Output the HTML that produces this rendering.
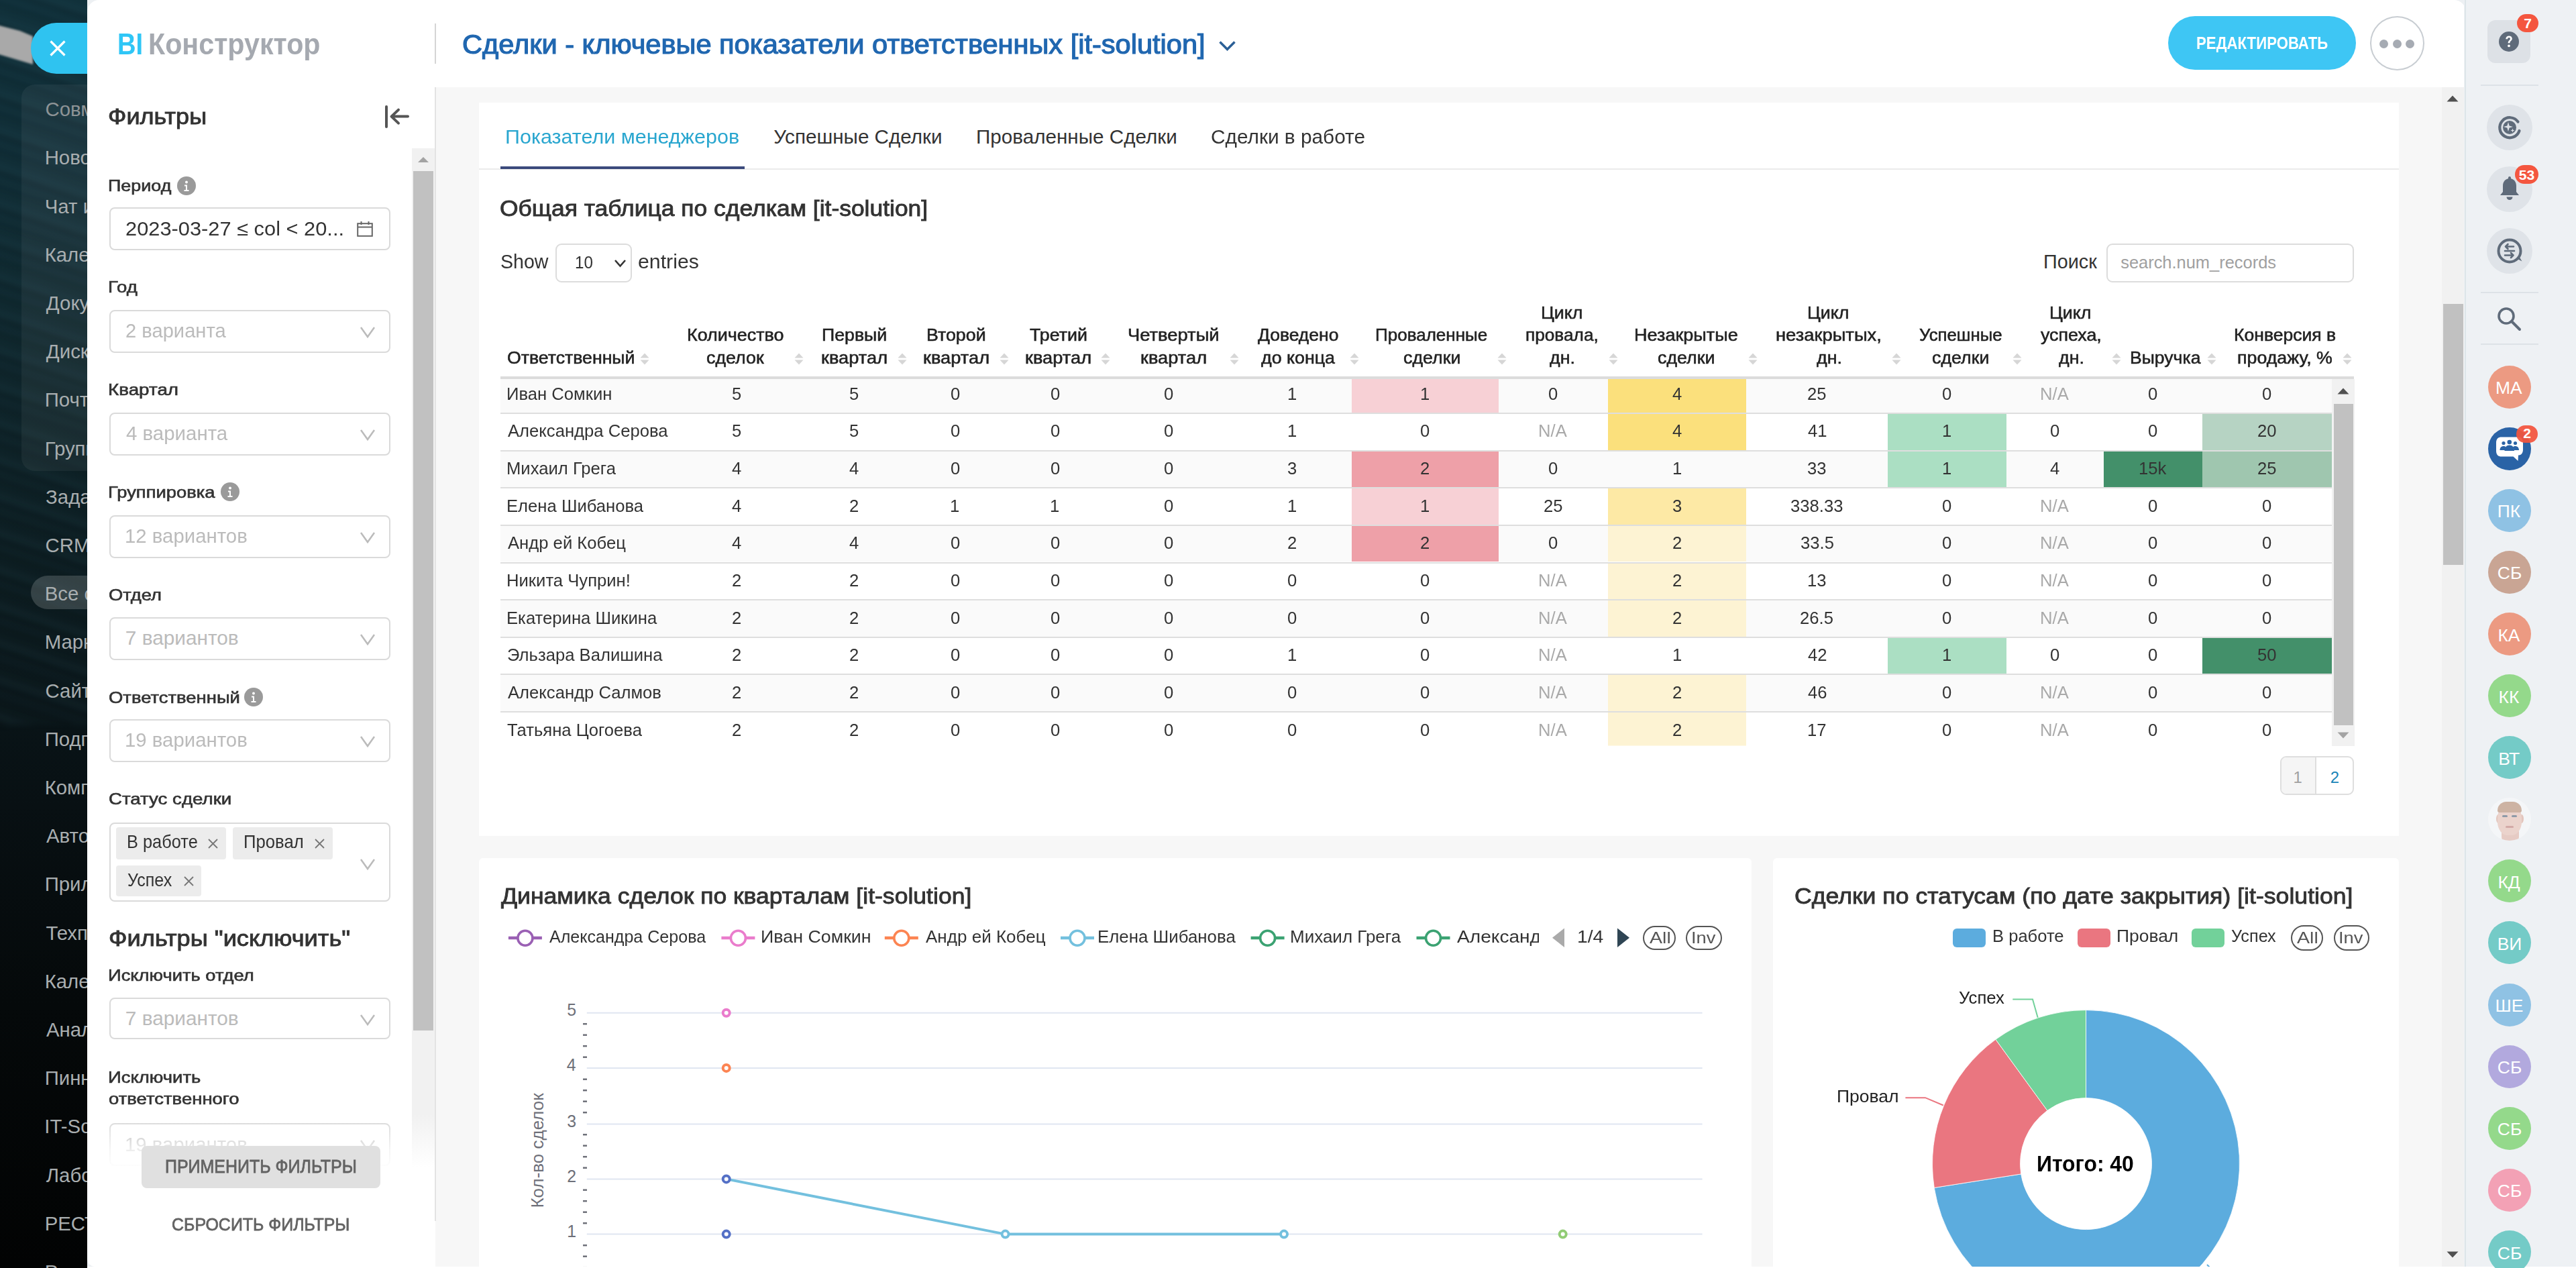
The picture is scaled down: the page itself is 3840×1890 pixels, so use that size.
<!DOCTYPE html><html><head><meta charset="utf-8"><style>
*{box-sizing:border-box}
html,body{margin:0;padding:0}
body{width:3840px;height:1890px;position:relative;overflow:hidden;font-family:"Liberation Sans",sans-serif;background:#050707}
.t{position:absolute;white-space:nowrap}
.b{position:absolute}
svg{position:absolute;overflow:visible}
</style></head><body><div class="b" style="left:0;top:0;width:140px;height:1890px;background:linear-gradient(180deg,#0f2e38 0px,#0f2b34 250px,#0e262d 450px,#0c1e23 700px,#0a171b 950px,#081013 1200px,#05090a 1500px,#020303 1890px)"></div><div class="b" style="left:-60px;top:-20px;width:260px;height:1100px;filter:blur(4px);background:repeating-linear-gradient(198deg,rgba(70,125,140,0.10) 0 12px,rgba(0,0,0,0.16) 12px 17px,rgba(60,115,130,0.06) 17px 33px,rgba(0,0,0,0.12) 33px 37px,rgba(70,125,140,0.04) 37px 52px);"></div><svg style="left:0;top:0;filter:blur(1.5px)" width="60" height="120" viewBox="0 0 60 120"><path d="M-5 37L30 46L49 54L49 96L-5 80Z" fill="#a9a9a9"/></svg><div class="b" style="left:32.00px;top:126.00px;width:168.00px;height:576.00px;background:rgba(255,255,255,0.05);border-radius:20px"></div><div class="b" style="left:46.00px;top:858.00px;width:154.00px;height:50.00px;background:rgba(255,255,255,0.17);border-radius:25px"></div><div class="t" style="left:67.53px;top:148.15px;font-size:29.36px;line-height:29.36px;color:#8d9396;">Совместные</div><div class="t" style="left:66.65px;top:220.35px;font-size:29.36px;line-height:29.36px;color:#a9aeb0;">Новости</div><div class="t" style="left:66.80px;top:292.55px;font-size:29.36px;line-height:29.36px;color:#a9aeb0;">Чат и звонки</div><div class="t" style="left:66.65px;top:364.75px;font-size:29.36px;line-height:29.36px;color:#a9aeb0;">Календарь</div><div class="t" style="left:68.85px;top:436.95px;font-size:29.36px;line-height:29.36px;color:#a9aeb0;">Документы</div><div class="t" style="left:68.85px;top:509.15px;font-size:29.36px;line-height:29.36px;color:#a9aeb0;">Диск</div><div class="t" style="left:66.65px;top:581.35px;font-size:29.36px;line-height:29.36px;color:#a9aeb0;">Почта</div><div class="t" style="left:66.65px;top:653.55px;font-size:29.36px;line-height:29.36px;color:#a9aeb0;">Группы</div><div class="t" style="left:68.12px;top:725.75px;font-size:29.36px;line-height:29.36px;color:#a9aeb0;">Задачи</div><div class="t" style="left:67.53px;top:797.95px;font-size:29.36px;line-height:29.36px;color:#a9aeb0;">CRM</div><div class="t" style="left:66.65px;top:870.15px;font-size:29.36px;line-height:29.36px;color:#a9aeb0;">Все с</div><div class="t" style="left:66.65px;top:942.35px;font-size:29.36px;line-height:29.36px;color:#a9aeb0;">Маркетинг</div><div class="t" style="left:67.53px;top:1014.55px;font-size:29.36px;line-height:29.36px;color:#a9aeb0;">Сайты</div><div class="t" style="left:66.65px;top:1086.75px;font-size:29.36px;line-height:29.36px;color:#a9aeb0;">Подписка</div><div class="t" style="left:66.65px;top:1158.95px;font-size:29.36px;line-height:29.36px;color:#a9aeb0;">Компания</div><div class="t" style="left:69.00px;top:1231.15px;font-size:29.36px;line-height:29.36px;color:#a9aeb0;">Автоматизация</div><div class="t" style="left:66.65px;top:1303.35px;font-size:29.36px;line-height:29.36px;color:#a9aeb0;">Приложения</div><div class="t" style="left:68.41px;top:1375.55px;font-size:29.36px;line-height:29.36px;color:#a9aeb0;">Техподдержка</div><div class="t" style="left:66.65px;top:1447.75px;font-size:29.36px;line-height:29.36px;color:#a9aeb0;">Календарь</div><div class="t" style="left:69.00px;top:1519.95px;font-size:29.36px;line-height:29.36px;color:#a9aeb0;">Аналитика</div><div class="t" style="left:66.65px;top:1592.15px;font-size:29.36px;line-height:29.36px;color:#a9aeb0;">Пинн</div><div class="t" style="left:66.36px;top:1664.35px;font-size:29.36px;line-height:29.36px;color:#a9aeb0;">IT-Solution</div><div class="t" style="left:68.85px;top:1736.55px;font-size:29.36px;line-height:29.36px;color:#a9aeb0;">Лаборатория</div><div class="t" style="left:66.65px;top:1808.75px;font-size:29.36px;line-height:29.36px;color:#a9aeb0;">РЕСТ</div><div class="t" style="left:66.65px;top:1880.95px;font-size:29.36px;line-height:29.36px;color:#a9aeb0;">Разное</div><div class="b" style="left:46.00px;top:34.00px;width:154.00px;height:76.00px;background:#2fc3f0;border-radius:38px"></div><svg style="left:74px;top:60px" width="24" height="24" viewBox="0 0 24 24"><path d="M1.5 1.5L22.5 22.5M22.5 1.5L1.5 22.5" stroke="#fff" stroke-width="3.2"/></svg><div class="b" style="left:3560.00px;top:0.00px;width:280.00px;height:1890.00px;background:#eef1f4"></div><div class="b" style="left:130.00px;top:0.00px;width:3543.00px;height:1890.00px;background:#edf0f3"></div><div class="b" style="left:130.00px;top:0.00px;width:3546.00px;height:1888.00px;background:#fff;border-radius:18px 18px 0 12px"></div><div class="b" style="left:649.00px;top:130.00px;width:3024.00px;height:1758.00px;background:#f7f7f7"></div><div class="b" style="left:648.00px;top:35.00px;width:2.00px;height:60.00px;background:#d5d5d5"></div><div class="b" style="left:648.00px;top:130.00px;width:2.00px;height:1690.00px;background:#e3e3e3"></div><div class="t" style="left:175.12px;top:43.87px;font-size:44.33px;line-height:44.33px;color:#2fc6f6;font-weight:700;transform:scaleX(0.8608);transform-origin:0 0;">BI</div><div class="t" style="left:221.32px;top:43.87px;font-size:44.33px;line-height:44.33px;color:#a5a9b0;font-weight:700;transform:scaleX(0.9299);transform-origin:0 0;">Конструктор</div><div class="t" style="left:688.72px;top:47.04px;font-size:40.12px;line-height:40.12px;color:#2067b0;-webkit-text-stroke:1.2px #2067b0;transform:scaleX(1.0360);transform-origin:0 0;">Сделки - ключевые показатели ответственных [it-solution]</div><svg style="left:1816px;top:60px" width="28" height="16" viewBox="0 0 28 16"><path d="M2.5 2.5L13.5 13.5L24.5 2.5" fill="none" stroke="#2b5f96" stroke-width="3.5"/></svg><div class="b" style="left:3232.00px;top:24.00px;width:280.00px;height:80.00px;background:#3ec6f4;border-radius:40px"></div><div class="t" style="left:3273.96px;top:52.86px;font-size:24.85px;line-height:24.85px;color:#fff;font-weight:700;transform:scaleX(0.8940);transform-origin:0 0;">РЕДАКТИРОВАТЬ</div><div class="b" style="left:3532.50px;top:24.30px;width:81.20px;height:80.70px;border:2px solid #c8cdd2;border-radius:50%"></div><div class="b" style="left:3546.90px;top:58.50px;width:13.00px;height:13.00px;background:#a6abb3;border-radius:50%"></div><div class="b" style="left:3566.50px;top:58.50px;width:13.00px;height:13.00px;background:#a6abb3;border-radius:50%"></div><div class="b" style="left:3586.20px;top:58.50px;width:13.00px;height:13.00px;background:#a6abb3;border-radius:50%"></div><div class="t" style="left:161.02px;top:157.30px;font-size:33.43px;line-height:33.43px;color:#333;-webkit-text-stroke:0.9px #333;transform:scaleX(1.0793);transform-origin:0 0;">Фильтры</div><svg style="left:570px;top:155px" width="44" height="38" viewBox="0 0 44 38"><path d="M6 4V34" stroke="#555" stroke-width="4" stroke-linecap="round"/><path d="M38 18.6H14M24 8.6L13.5 18.6L24 28.6" fill="none" stroke="#555" stroke-width="4" stroke-linecap="round" stroke-linejoin="round"/></svg><div class="t" style="left:160.84px;top:264.81px;font-size:24.56px;line-height:24.56px;color:#333;-webkit-text-stroke:0.65px #333;transform:scaleX(1.0967);transform-origin:0 0;">Период</div><div class="b" style="left:264px;top:263px;width:28px;height:28px;border-radius:50%;background:#9a9a9a"></div><svg style="left:264px;top:263px" width="28" height="28" viewBox="0 0 28 28"><circle cx="14" cy="8.5" r="2" fill="#fff"/><path d="M11 12.5H15V20H17.5V22H10.5V20H13V14.5H11Z" fill="#fff"/></svg><div class="b" style="left:163.00px;top:309.00px;width:419.00px;height:64.00px;border:2px solid #dadada;border-radius:8px;background:#fff"></div><div class="t" style="left:187.46px;top:326.02px;font-size:29.51px;line-height:29.51px;color:#333;transform:scaleX(1.0442);transform-origin:0 0;">2023-03-27 ≤ col &lt; 20...</div><svg style="left:532px;top:329px" width="24" height="24" viewBox="0 0 24 24"><rect x="1.2" y="4.2" width="21.6" height="18.6" fill="none" stroke="#666" stroke-width="2"/><path d="M1 9.5H23M6.5 1V6M17.5 1V6" stroke="#666" stroke-width="2"/></svg><div class="t" style="left:160.79px;top:416.21px;font-size:24.56px;line-height:24.56px;color:#333;-webkit-text-stroke:0.65px #333;transform:scaleX(1.1236);transform-origin:0 0;">Год</div><div class="b" style="left:163.00px;top:462.00px;width:419.00px;height:64.00px;border:2px solid #dadada;border-radius:8px;background:#fff"></div><div class="t" style="left:186.84px;top:478.38px;font-size:29.80px;line-height:29.80px;color:#bbbbbb;transform:scaleX(0.9778);transform-origin:0 0;">2 варианта</div><svg style="left:537px;top:487px" width="22" height="16" viewBox="0 0 22 16"><path d="M1 1L11.0 15L21 1" fill="none" stroke="#bbb" stroke-width="2.5"/></svg><div class="t" style="left:160.77px;top:569.21px;font-size:24.56px;line-height:24.56px;color:#333;-webkit-text-stroke:0.65px #333;transform:scaleX(1.1327);transform-origin:0 0;">Квартал</div><div class="b" style="left:163.00px;top:615.00px;width:419.00px;height:64.00px;border:2px solid #dadada;border-radius:8px;background:#fff"></div><div class="t" style="left:187.71px;top:631.38px;font-size:29.80px;line-height:29.80px;color:#bbbbbb;transform:scaleX(0.9878);transform-origin:0 0;">4 варианта</div><svg style="left:537px;top:640px" width="22" height="16" viewBox="0 0 22 16"><path d="M1 1L11.0 15L21 1" fill="none" stroke="#bbb" stroke-width="2.5"/></svg><div class="t" style="left:160.81px;top:722.21px;font-size:24.56px;line-height:24.56px;color:#333;-webkit-text-stroke:0.65px #333;transform:scaleX(1.1141);transform-origin:0 0;">Группировка</div><div class="b" style="left:329px;top:719px;width:28px;height:28px;border-radius:50%;background:#9a9a9a"></div><svg style="left:329px;top:719px" width="28" height="28" viewBox="0 0 28 28"><circle cx="14" cy="8.5" r="2" fill="#fff"/><path d="M11 12.5H15V20H17.5V22H10.5V20H13V14.5H11Z" fill="#fff"/></svg><div class="b" style="left:163.00px;top:767.50px;width:419.00px;height:64.00px;border:2px solid #dadada;border-radius:8px;background:#fff"></div><div class="t" style="left:186.10px;top:783.88px;font-size:29.80px;line-height:29.80px;color:#bbbbbb;transform:scaleX(0.9854);transform-origin:0 0;">12 вариантов</div><svg style="left:537px;top:792.5px" width="22" height="16.0" viewBox="0 0 22 16.0"><path d="M1 1L11.0 15.0L21 1" fill="none" stroke="#bbb" stroke-width="2.5"/></svg><div class="t" style="left:161.77px;top:874.81px;font-size:24.56px;line-height:24.56px;color:#333;-webkit-text-stroke:0.65px #333;transform:scaleX(1.1129);transform-origin:0 0;">Отдел</div><div class="b" style="left:163.00px;top:920.00px;width:419.00px;height:64.00px;border:2px solid #dadada;border-radius:8px;background:#fff"></div><div class="t" style="left:186.81px;top:936.38px;font-size:29.80px;line-height:29.80px;color:#bbbbbb;">7 вариантов</div><svg style="left:537px;top:945px" width="22" height="16" viewBox="0 0 22 16"><path d="M1 1L11.0 15L21 1" fill="none" stroke="#bbb" stroke-width="2.5"/></svg><div class="t" style="left:161.76px;top:1027.71px;font-size:24.56px;line-height:24.56px;color:#333;-webkit-text-stroke:0.65px #333;transform:scaleX(1.1176);transform-origin:0 0;">Ответственный</div><div class="b" style="left:363.5px;top:1024.5px;width:28px;height:28px;border-radius:50%;background:#9a9a9a"></div><svg style="left:363.5px;top:1024.5px" width="28" height="28" viewBox="0 0 28 28"><circle cx="14" cy="8.5" r="2" fill="#fff"/><path d="M11 12.5H15V20H17.5V22H10.5V20H13V14.5H11Z" fill="#fff"/></svg><div class="b" style="left:163.00px;top:1072.00px;width:419.00px;height:64.00px;border:2px solid #dadada;border-radius:8px;background:#fff"></div><div class="t" style="left:186.10px;top:1088.38px;font-size:29.80px;line-height:29.80px;color:#bbbbbb;transform:scaleX(0.9854);transform-origin:0 0;">19 вариантов</div><svg style="left:537px;top:1097px" width="22" height="16" viewBox="0 0 22 16"><path d="M1 1L11.0 15L21 1" fill="none" stroke="#bbb" stroke-width="2.5"/></svg><div class="t" style="left:161.62px;top:1178.91px;font-size:24.56px;line-height:24.56px;color:#333;-webkit-text-stroke:0.65px #333;transform:scaleX(1.1265);transform-origin:0 0;">Статус сделки</div><div class="b" style="left:163.00px;top:1226.00px;width:419.00px;height:118.00px;border:2px solid #dadada;border-radius:8px;background:#fff"></div><div class="b" style="left:172.60px;top:1233.00px;width:164.40px;height:47.70px;background:#ececec;border-radius:4px"></div><div class="t" style="left:188.67px;top:1242.31px;font-size:27.03px;line-height:27.03px;color:#333;transform:scaleX(0.9400);transform-origin:0 0;">В работе</div><svg style="left:310px;top:1249.5px" width="15" height="15" viewBox="0 0 15 15"><path d="M1 1L14 14M14 1L1 14" stroke="#777" stroke-width="1.8"/></svg><div class="b" style="left:346.50px;top:1233.00px;width:149.00px;height:47.70px;background:#ececec;border-radius:4px"></div><div class="t" style="left:362.54px;top:1242.31px;font-size:27.03px;line-height:27.03px;color:#333;transform:scaleX(0.9524);transform-origin:0 0;">Провал</div><svg style="left:468.5px;top:1249.5px" width="15" height="15" viewBox="0 0 15 15"><path d="M1 1L14 14M14 1L1 14" stroke="#777" stroke-width="1.8"/></svg><div class="b" style="left:172.60px;top:1289.50px;width:127.40px;height:46.50px;background:#ececec;border-radius:4px"></div><div class="t" style="left:190.07px;top:1298.81px;font-size:27.03px;line-height:27.03px;color:#333;transform:scaleX(0.9283);transform-origin:0 0;">Успех</div><svg style="left:274px;top:1306.0px" width="15" height="15" viewBox="0 0 15 15"><path d="M1 1L14 14M14 1L1 14" stroke="#777" stroke-width="1.8"/></svg><svg style="left:537px;top:1280px" width="22" height="16" viewBox="0 0 22 16"><path d="M1 1L11.0 15L21 1" fill="none" stroke="#bbb" stroke-width="2.5"/></svg><div class="t" style="left:161.81px;top:1382.69px;font-size:32.85px;line-height:32.85px;color:#333;-webkit-text-stroke:0.9px #333;transform:scaleX(1.1033);transform-origin:0 0;">Фильтры &quot;исключить&quot;</div><div class="t" style="left:160.81px;top:1441.71px;font-size:24.56px;line-height:24.56px;color:#333;-webkit-text-stroke:0.65px #333;transform:scaleX(1.1137);transform-origin:0 0;">Исключить отдел</div><div class="b" style="left:163.00px;top:1487.00px;width:419.00px;height:61.50px;border:2px solid #dadada;border-radius:8px;background:#fff"></div><div class="t" style="left:186.81px;top:1503.38px;font-size:29.80px;line-height:29.80px;color:#bbbbbb;">7 вариантов</div><svg style="left:537px;top:1512px" width="22" height="16" viewBox="0 0 22 16"><path d="M1 1L11.0 15L21 1" fill="none" stroke="#bbb" stroke-width="2.5"/></svg><div class="t" style="left:160.80px;top:1593.61px;font-size:24.56px;line-height:24.56px;color:#333;-webkit-text-stroke:0.65px #333;transform:scaleX(1.1182);transform-origin:0 0;">Исключить</div><div class="t" style="left:161.90px;top:1626.21px;font-size:24.56px;line-height:24.56px;color:#333;-webkit-text-stroke:0.65px #333;transform:scaleX(1.1203);transform-origin:0 0;">ответственного</div><div class="b" style="left:163.00px;top:1674.30px;width:419.00px;height:64.00px;border:2px solid #dadada;border-radius:8px;background:#fff"></div><div class="t" style="left:186.10px;top:1690.68px;font-size:29.80px;line-height:29.80px;color:#bbbbbb;transform:scaleX(0.9854);transform-origin:0 0;">19 вариантов</div><svg style="left:537px;top:1699.3px" width="22" height="16.0" viewBox="0 0 22 16.0"><path d="M1 1L11.0 15.0L21 1" fill="none" stroke="#bbb" stroke-width="2.5"/></svg><div class="b" style="left:150.00px;top:1670.00px;width:464.00px;height:75.00px;background:linear-gradient(180deg,rgba(255,255,255,0),rgba(255,255,255,.75) 60%,#fff)"></div><div class="b" style="left:614.00px;top:221.00px;width:34.00px;height:1519.00px;background:linear-gradient(180deg,#f1f1f1 0,#f1f1f1 1440px,rgba(241,241,241,0) 1519px)"></div><div class="b" style="left:616.00px;top:255.00px;width:30.00px;height:1281.00px;background:#c1c1c1"></div><svg style="left:621px;top:232px" width="20" height="12" viewBox="0 0 20 12"><path d="M2 10L10 2L18 10Z" fill="#a3a3a3"/></svg><div class="b" style="left:150.00px;top:1745.00px;width:464.00px;height:143.00px;background:#fff"></div><div class="b" style="left:211.00px;top:1707.80px;width:356.00px;height:63.50px;background:#e0e0e0;border-radius:8px"></div><div class="t" style="left:245.80px;top:1725.74px;font-size:26.89px;line-height:26.89px;color:#636363;-webkit-text-stroke:0.8px #636363;transform:scaleX(0.9293);transform-origin:0 0;">ПРИМЕНИТЬ ФИЛЬТРЫ</div><div class="t" style="left:256.45px;top:1811.88px;font-size:26.60px;line-height:26.60px;color:#636363;-webkit-text-stroke:0.8px #636363;transform:scaleX(0.9379);transform-origin:0 0;">СБРОСИТЬ ФИЛЬТРЫ</div><div class="b" style="left:714.00px;top:153.00px;width:2862.00px;height:1093.00px;background:#fff"></div><div class="b" style="left:714.00px;top:250.50px;width:2862.00px;height:2.00px;background:#ebebeb"></div><div class="b" style="left:746.00px;top:248.40px;width:364.00px;height:4.00px;background:#3b4a7c"></div><div class="t" style="left:752.56px;top:188.60px;font-size:29.65px;line-height:29.65px;color:#29a6cf;transform:scaleX(1.0292);transform-origin:0 0;">Показатели менеджеров</div><div class="t" style="left:1153.26px;top:188.60px;font-size:29.65px;line-height:29.65px;color:#333;">Успешные Сделки</div><div class="t" style="left:1455.03px;top:188.60px;font-size:29.65px;line-height:29.65px;color:#333;">Проваленные Сделки</div><div class="t" style="left:1805.21px;top:188.60px;font-size:29.65px;line-height:29.65px;color:#333;transform:scaleX(1.0054);transform-origin:0 0;">Сделки в работе</div><div class="t" style="left:745.01px;top:294.40px;font-size:33.43px;line-height:33.43px;color:#333;-webkit-text-stroke:0.9px #333;transform:scaleX(1.0602);transform-origin:0 0;">Общая таблица по сделкам [it-solution]</div><div class="t" style="left:746.11px;top:375.64px;font-size:28.78px;line-height:28.78px;color:#333;transform:scaleX(0.9930);transform-origin:0 0;">Show</div><div class="b" style="left:827.80px;top:362.80px;width:114.20px;height:58.20px;border:2px solid #dcdcdc;border-radius:9px"></div><div class="t" style="left:856.68px;top:379.47px;font-size:25.44px;line-height:25.44px;color:#333;transform:scaleX(0.9514);transform-origin:0 0;">10</div><svg style="left:915.6px;top:387px" width="17.0" height="10.5" viewBox="0 0 17.0 10.5"><path d="M1 1L8.5 9.5L16.0 1" fill="none" stroke="#333" stroke-width="2.6"/></svg><div class="t" style="left:950.79px;top:375.64px;font-size:28.78px;line-height:28.78px;color:#333;transform:scaleX(1.0525);transform-origin:0 0;">entries</div><div class="t" style="left:3046.10px;top:376.44px;font-size:28.78px;line-height:28.78px;color:#333;">Поиск</div><div class="b" style="left:3140.00px;top:362.60px;width:369.00px;height:58.40px;border:2px solid #dcdcdc;border-radius:9px"></div><div class="t" style="left:3161.16px;top:378.97px;font-size:25.44px;line-height:25.44px;color:#a0a0a0;">search.num_records</div><div class="t" style="left:755.60px;top:521.29px;font-size:25.29px;line-height:25.29px;color:#222;-webkit-text-stroke:0.55px #222;transform:scaleX(1.0546);transform-origin:0 0;">Ответственный</div><svg style="left:954px;top:526px" width="14" height="18" viewBox="0 0 14 18"><path d="M7 0.5L13.5 7.5H0.5Z M7 17.5L13.5 10.5H0.5Z" fill="#d6d6d6"/></svg><div class="t" style="left:1023.85px;top:487.49px;font-size:25.29px;line-height:25.29px;color:#222;-webkit-text-stroke:0.55px #222;transform:scaleX(1.0650);transform-origin:0 0;">Количество</div><div class="t" style="left:1053.27px;top:521.29px;font-size:25.29px;line-height:25.29px;color:#222;-webkit-text-stroke:0.55px #222;transform:scaleX(1.0600);transform-origin:0 0;">сделок</div><svg style="left:1184.2px;top:526px" width="14" height="18" viewBox="0 0 14 18"><path d="M7 0.5L13.5 7.5H0.5Z M7 17.5L13.5 10.5H0.5Z" fill="#d6d6d6"/></svg><div class="t" style="left:1224.66px;top:487.49px;font-size:25.29px;line-height:25.29px;color:#222;-webkit-text-stroke:0.55px #222;transform:scaleX(1.0559);transform-origin:0 0;">Первый</div><div class="t" style="left:1223.93px;top:521.29px;font-size:25.29px;line-height:25.29px;color:#222;-webkit-text-stroke:0.55px #222;transform:scaleX(1.0778);transform-origin:0 0;">квартал</div><svg style="left:1338.2px;top:526px" width="14" height="18" viewBox="0 0 14 18"><path d="M7 0.5L13.5 7.5H0.5Z M7 17.5L13.5 10.5H0.5Z" fill="#d6d6d6"/></svg><div class="t" style="left:1381.00px;top:487.49px;font-size:25.29px;line-height:25.29px;color:#222;-webkit-text-stroke:0.55px #222;transform:scaleX(1.0600);transform-origin:0 0;">Второй</div><div class="t" style="left:1376.03px;top:521.29px;font-size:25.29px;line-height:25.29px;color:#222;-webkit-text-stroke:0.55px #222;transform:scaleX(1.0778);transform-origin:0 0;">квартал</div><svg style="left:1489.6px;top:526px" width="14" height="18" viewBox="0 0 14 18"><path d="M7 0.5L13.5 7.5H0.5Z M7 17.5L13.5 10.5H0.5Z" fill="#d6d6d6"/></svg><div class="t" style="left:1535.44px;top:487.49px;font-size:25.29px;line-height:25.29px;color:#222;-webkit-text-stroke:0.55px #222;transform:scaleX(1.0600);transform-origin:0 0;">Третий</div><div class="t" style="left:1528.33px;top:521.29px;font-size:25.29px;line-height:25.29px;color:#222;-webkit-text-stroke:0.55px #222;transform:scaleX(1.0778);transform-origin:0 0;">квартал</div><svg style="left:1641px;top:526px" width="14" height="18" viewBox="0 0 14 18"><path d="M7 0.5L13.5 7.5H0.5Z M7 17.5L13.5 10.5H0.5Z" fill="#d6d6d6"/></svg><div class="t" style="left:1681.00px;top:487.49px;font-size:25.29px;line-height:25.29px;color:#222;-webkit-text-stroke:0.55px #222;transform:scaleX(1.0819);transform-origin:0 0;">Четвертый</div><div class="t" style="left:1699.93px;top:521.29px;font-size:25.29px;line-height:25.29px;color:#222;-webkit-text-stroke:0.55px #222;transform:scaleX(1.0778);transform-origin:0 0;">квартал</div><svg style="left:1833px;top:526px" width="14" height="18" viewBox="0 0 14 18"><path d="M7 0.5L13.5 7.5H0.5Z M7 17.5L13.5 10.5H0.5Z" fill="#d6d6d6"/></svg><div class="t" style="left:1875.07px;top:487.49px;font-size:25.29px;line-height:25.29px;color:#222;-webkit-text-stroke:0.55px #222;transform:scaleX(1.0474);transform-origin:0 0;">Доведено</div><div class="t" style="left:1879.71px;top:521.29px;font-size:25.29px;line-height:25.29px;color:#222;-webkit-text-stroke:0.55px #222;transform:scaleX(1.0600);transform-origin:0 0;">до конца</div><svg style="left:2012.3px;top:526px" width="14" height="18" viewBox="0 0 14 18"><path d="M7 0.5L13.5 7.5H0.5Z M7 17.5L13.5 10.5H0.5Z" fill="#d6d6d6"/></svg><div class="t" style="left:2049.87px;top:487.49px;font-size:25.29px;line-height:25.29px;color:#222;-webkit-text-stroke:0.55px #222;transform:scaleX(1.0291);transform-origin:0 0;">Проваленные</div><div class="t" style="left:2091.64px;top:521.29px;font-size:25.29px;line-height:25.29px;color:#222;-webkit-text-stroke:0.55px #222;transform:scaleX(1.0600);transform-origin:0 0;">сделки</div><svg style="left:2232.4px;top:526px" width="14" height="18" viewBox="0 0 14 18"><path d="M7 0.5L13.5 7.5H0.5Z M7 17.5L13.5 10.5H0.5Z" fill="#d6d6d6"/></svg><div class="t" style="left:2296.93px;top:453.69px;font-size:25.29px;line-height:25.29px;color:#222;-webkit-text-stroke:0.55px #222;transform:scaleX(1.0600);transform-origin:0 0;">Цикл</div><div class="t" style="left:2274.19px;top:487.49px;font-size:25.29px;line-height:25.29px;color:#222;-webkit-text-stroke:0.55px #222;transform:scaleX(1.0373);transform-origin:0 0;">провала,</div><div class="t" style="left:2310.47px;top:521.29px;font-size:25.29px;line-height:25.29px;color:#222;-webkit-text-stroke:0.55px #222;transform:scaleX(1.0600);transform-origin:0 0;">дн.</div><svg style="left:2398px;top:526px" width="14" height="18" viewBox="0 0 14 18"><path d="M7 0.5L13.5 7.5H0.5Z M7 17.5L13.5 10.5H0.5Z" fill="#d6d6d6"/></svg><div class="t" style="left:2435.78px;top:487.49px;font-size:25.29px;line-height:25.29px;color:#222;-webkit-text-stroke:0.55px #222;transform:scaleX(1.0707);transform-origin:0 0;">Незакрытые</div><div class="t" style="left:2471.34px;top:521.29px;font-size:25.29px;line-height:25.29px;color:#222;-webkit-text-stroke:0.55px #222;transform:scaleX(1.0600);transform-origin:0 0;">сделки</div><svg style="left:2606px;top:526px" width="14" height="18" viewBox="0 0 14 18"><path d="M7 0.5L13.5 7.5H0.5Z M7 17.5L13.5 10.5H0.5Z" fill="#d6d6d6"/></svg><div class="t" style="left:2694.03px;top:453.69px;font-size:25.29px;line-height:25.29px;color:#222;-webkit-text-stroke:0.55px #222;transform:scaleX(1.0600);transform-origin:0 0;">Цикл</div><div class="t" style="left:2646.77px;top:487.49px;font-size:25.29px;line-height:25.29px;color:#222;-webkit-text-stroke:0.55px #222;transform:scaleX(1.0823);transform-origin:0 0;">незакрытых,</div><div class="t" style="left:2707.57px;top:521.29px;font-size:25.29px;line-height:25.29px;color:#222;-webkit-text-stroke:0.55px #222;transform:scaleX(1.0600);transform-origin:0 0;">дн.</div><svg style="left:2819.7px;top:526px" width="14" height="18" viewBox="0 0 14 18"><path d="M7 0.5L13.5 7.5H0.5Z M7 17.5L13.5 10.5H0.5Z" fill="#d6d6d6"/></svg><div class="t" style="left:2860.56px;top:487.49px;font-size:25.29px;line-height:25.29px;color:#222;-webkit-text-stroke:0.55px #222;transform:scaleX(1.0199);transform-origin:0 0;">Успешные</div><div class="t" style="left:2879.84px;top:521.29px;font-size:25.29px;line-height:25.29px;color:#222;-webkit-text-stroke:0.55px #222;transform:scaleX(1.0600);transform-origin:0 0;">сделки</div><svg style="left:3000px;top:526px" width="14" height="18" viewBox="0 0 14 18"><path d="M7 0.5L13.5 7.5H0.5Z M7 17.5L13.5 10.5H0.5Z" fill="#d6d6d6"/></svg><div class="t" style="left:3055.13px;top:453.69px;font-size:25.29px;line-height:25.29px;color:#222;-webkit-text-stroke:0.55px #222;transform:scaleX(1.0600);transform-origin:0 0;">Цикл</div><div class="t" style="left:3042.25px;top:487.49px;font-size:25.29px;line-height:25.29px;color:#222;-webkit-text-stroke:0.55px #222;transform:scaleX(1.0604);transform-origin:0 0;">успеха,</div><div class="t" style="left:3068.67px;top:521.29px;font-size:25.29px;line-height:25.29px;color:#222;-webkit-text-stroke:0.55px #222;transform:scaleX(1.0600);transform-origin:0 0;">дн.</div><svg style="left:3147.7px;top:526px" width="14" height="18" viewBox="0 0 14 18"><path d="M7 0.5L13.5 7.5H0.5Z M7 17.5L13.5 10.5H0.5Z" fill="#d6d6d6"/></svg><div class="t" style="left:3175.17px;top:521.29px;font-size:25.29px;line-height:25.29px;color:#222;-webkit-text-stroke:0.55px #222;transform:scaleX(1.0510);transform-origin:0 0;">Выручка</div><svg style="left:3290px;top:526px" width="14" height="18" viewBox="0 0 14 18"><path d="M7 0.5L13.5 7.5H0.5Z M7 17.5L13.5 10.5H0.5Z" fill="#d6d6d6"/></svg><div class="t" style="left:3329.88px;top:487.49px;font-size:25.29px;line-height:25.29px;color:#222;-webkit-text-stroke:0.55px #222;transform:scaleX(1.0502);transform-origin:0 0;">Конверсия в</div><div class="t" style="left:3335.12px;top:521.29px;font-size:25.29px;line-height:25.29px;color:#222;-webkit-text-stroke:0.55px #222;transform:scaleX(1.0600);transform-origin:0 0;">продажу, %</div><svg style="left:3492.4px;top:526px" width="14" height="18" viewBox="0 0 14 18"><path d="M7 0.5L13.5 7.5H0.5Z M7 17.5L13.5 10.5H0.5Z" fill="#d6d6d6"/></svg><div class="b" style="left:746.00px;top:561.30px;width:2763.00px;height:3.50px;background:#dcdcdc"></div><div class="b" style="left:0;top:0;width:3840px;height:1111.6px;clip-path:inset(564px 0 0 0)"><div class="b" style="left:746.00px;top:564.80px;width:2730.00px;height:50.10px;background:#fafafa"></div><div class="t" style="left:754.75px;top:574.71px;font-size:25.15px;line-height:25.15px;color:#333;transform:scaleX(1.0200);transform-origin:0 0;">Иван Сомкин</div><div class="t" style="left:1091.38px;top:574.71px;font-size:25.15px;line-height:25.15px;color:#333;transform:scaleX(1.0200);transform-origin:0 0;">5</div><div class="t" style="left:1265.88px;top:574.71px;font-size:25.15px;line-height:25.15px;color:#333;transform:scaleX(1.0200);transform-origin:0 0;">5</div><div class="t" style="left:1416.58px;top:574.71px;font-size:25.15px;line-height:25.15px;color:#333;transform:scaleX(1.0200);transform-origin:0 0;">0</div><div class="t" style="left:1565.58px;top:574.71px;font-size:25.15px;line-height:25.15px;color:#333;transform:scaleX(1.0200);transform-origin:0 0;">0</div><div class="t" style="left:1735.38px;top:574.71px;font-size:25.15px;line-height:25.15px;color:#333;transform:scaleX(1.0200);transform-origin:0 0;">0</div><div class="t" style="left:1918.50px;top:574.71px;font-size:25.15px;line-height:25.15px;color:#333;transform:scaleX(1.0200);transform-origin:0 0;">1</div><div class="b" style="left:2015.00px;top:564.80px;width:219.00px;height:50.10px;background:#f7d0d5"></div><div class="t" style="left:2117.00px;top:574.71px;font-size:25.15px;line-height:25.15px;color:#333;transform:scaleX(1.0200);transform-origin:0 0;">1</div><div class="t" style="left:2308.38px;top:574.71px;font-size:25.15px;line-height:25.15px;color:#333;transform:scaleX(1.0200);transform-origin:0 0;">0</div><div class="b" style="left:2397.00px;top:564.80px;width:206.00px;height:50.10px;background:#fbe07c"></div><div class="t" style="left:2492.95px;top:574.71px;font-size:25.15px;line-height:25.15px;color:#333;transform:scaleX(1.0200);transform-origin:0 0;">4</div><div class="t" style="left:2694.14px;top:574.71px;font-size:25.15px;line-height:25.15px;color:#333;transform:scaleX(1.0200);transform-origin:0 0;">25</div><div class="t" style="left:2895.23px;top:574.71px;font-size:25.15px;line-height:25.15px;color:#333;transform:scaleX(1.0200);transform-origin:0 0;">0</div><div class="t" style="left:3040.97px;top:574.71px;font-size:25.15px;line-height:25.15px;color:#a9a9a9;transform:scaleX(1.0200);transform-origin:0 0;">N/A</div><div class="t" style="left:3202.38px;top:574.71px;font-size:25.15px;line-height:25.15px;color:#333;transform:scaleX(1.0200);transform-origin:0 0;">0</div><div class="t" style="left:3372.38px;top:574.71px;font-size:25.15px;line-height:25.15px;color:#333;transform:scaleX(1.0200);transform-origin:0 0;">0</div><div class="b" style="left:746.00px;top:614.90px;width:2730.00px;height:2.00px;background:#dedede"></div><div class="t" style="left:756.80px;top:630.36px;font-size:25.15px;line-height:25.15px;color:#333;transform:scaleX(1.0200);transform-origin:0 0;">Александра Серова</div><div class="t" style="left:1091.38px;top:630.36px;font-size:25.15px;line-height:25.15px;color:#333;transform:scaleX(1.0200);transform-origin:0 0;">5</div><div class="t" style="left:1265.88px;top:630.36px;font-size:25.15px;line-height:25.15px;color:#333;transform:scaleX(1.0200);transform-origin:0 0;">5</div><div class="t" style="left:1416.58px;top:630.36px;font-size:25.15px;line-height:25.15px;color:#333;transform:scaleX(1.0200);transform-origin:0 0;">0</div><div class="t" style="left:1565.58px;top:630.36px;font-size:25.15px;line-height:25.15px;color:#333;transform:scaleX(1.0200);transform-origin:0 0;">0</div><div class="t" style="left:1735.38px;top:630.36px;font-size:25.15px;line-height:25.15px;color:#333;transform:scaleX(1.0200);transform-origin:0 0;">0</div><div class="t" style="left:1918.50px;top:630.36px;font-size:25.15px;line-height:25.15px;color:#333;transform:scaleX(1.0200);transform-origin:0 0;">1</div><div class="t" style="left:2117.38px;top:630.36px;font-size:25.15px;line-height:25.15px;color:#333;transform:scaleX(1.0200);transform-origin:0 0;">0</div><div class="t" style="left:2293.12px;top:630.36px;font-size:25.15px;line-height:25.15px;color:#a9a9a9;transform:scaleX(1.0200);transform-origin:0 0;">N/A</div><div class="b" style="left:2397.00px;top:616.90px;width:206.00px;height:53.65px;background:#fbe07c"></div><div class="t" style="left:2492.95px;top:630.36px;font-size:25.15px;line-height:25.15px;color:#333;transform:scaleX(1.0200);transform-origin:0 0;">4</div><div class="t" style="left:2694.59px;top:630.36px;font-size:25.15px;line-height:25.15px;color:#333;transform:scaleX(1.0200);transform-origin:0 0;">41</div><div class="b" style="left:2814.00px;top:616.90px;width:176.70px;height:53.65px;background:#abdfc3"></div><div class="t" style="left:2894.85px;top:630.36px;font-size:25.15px;line-height:25.15px;color:#333;transform:scaleX(1.0200);transform-origin:0 0;">1</div><div class="t" style="left:3056.23px;top:630.36px;font-size:25.15px;line-height:25.15px;color:#333;transform:scaleX(1.0200);transform-origin:0 0;">0</div><div class="t" style="left:3202.38px;top:630.36px;font-size:25.15px;line-height:25.15px;color:#333;transform:scaleX(1.0200);transform-origin:0 0;">0</div><div class="b" style="left:3283.00px;top:616.90px;width:193.00px;height:53.65px;background:#b6d3c3"></div><div class="t" style="left:3365.07px;top:630.36px;font-size:25.15px;line-height:25.15px;color:#333;transform:scaleX(1.0200);transform-origin:0 0;">20</div><div class="b" style="left:746.00px;top:670.55px;width:2730.00px;height:2.00px;background:#dedede"></div><div class="b" style="left:746.00px;top:672.55px;width:2730.00px;height:53.65px;background:#fafafa"></div><div class="t" style="left:754.75px;top:686.01px;font-size:25.15px;line-height:25.15px;color:#333;transform:scaleX(1.0200);transform-origin:0 0;">Михаил Грега</div><div class="t" style="left:1091.45px;top:686.01px;font-size:25.15px;line-height:25.15px;color:#333;transform:scaleX(1.0200);transform-origin:0 0;">4</div><div class="t" style="left:1265.95px;top:686.01px;font-size:25.15px;line-height:25.15px;color:#333;transform:scaleX(1.0200);transform-origin:0 0;">4</div><div class="t" style="left:1416.58px;top:686.01px;font-size:25.15px;line-height:25.15px;color:#333;transform:scaleX(1.0200);transform-origin:0 0;">0</div><div class="t" style="left:1565.58px;top:686.01px;font-size:25.15px;line-height:25.15px;color:#333;transform:scaleX(1.0200);transform-origin:0 0;">0</div><div class="t" style="left:1735.38px;top:686.01px;font-size:25.15px;line-height:25.15px;color:#333;transform:scaleX(1.0200);transform-origin:0 0;">0</div><div class="t" style="left:1918.95px;top:686.01px;font-size:25.15px;line-height:25.15px;color:#333;transform:scaleX(1.0200);transform-origin:0 0;">3</div><div class="b" style="left:2015.00px;top:672.55px;width:219.00px;height:53.65px;background:#eea0a8"></div><div class="t" style="left:2117.32px;top:686.01px;font-size:25.15px;line-height:25.15px;color:#333;transform:scaleX(1.0200);transform-origin:0 0;">2</div><div class="t" style="left:2308.38px;top:686.01px;font-size:25.15px;line-height:25.15px;color:#333;transform:scaleX(1.0200);transform-origin:0 0;">0</div><div class="t" style="left:2492.50px;top:686.01px;font-size:25.15px;line-height:25.15px;color:#333;transform:scaleX(1.0200);transform-origin:0 0;">1</div><div class="t" style="left:2694.33px;top:686.01px;font-size:25.15px;line-height:25.15px;color:#333;transform:scaleX(1.0200);transform-origin:0 0;">33</div><div class="b" style="left:2814.00px;top:672.55px;width:176.70px;height:53.65px;background:#abdfc3"></div><div class="t" style="left:2894.85px;top:686.01px;font-size:25.15px;line-height:25.15px;color:#333;transform:scaleX(1.0200);transform-origin:0 0;">1</div><div class="t" style="left:3056.30px;top:686.01px;font-size:25.15px;line-height:25.15px;color:#333;transform:scaleX(1.0200);transform-origin:0 0;">4</div><div class="b" style="left:3136.00px;top:672.55px;width:147.00px;height:53.65px;background:#43906a"></div><div class="t" style="left:3187.83px;top:686.01px;font-size:25.15px;line-height:25.15px;color:#333;transform:scaleX(1.0200);transform-origin:0 0;">15k</div><div class="b" style="left:3283.00px;top:672.55px;width:193.00px;height:53.65px;background:#9fc6af"></div><div class="t" style="left:3365.14px;top:686.01px;font-size:25.15px;line-height:25.15px;color:#333;transform:scaleX(1.0200);transform-origin:0 0;">25</div><div class="b" style="left:746.00px;top:726.20px;width:2730.00px;height:2.00px;background:#dedede"></div><div class="t" style="left:754.75px;top:741.66px;font-size:25.15px;line-height:25.15px;color:#333;transform:scaleX(1.0200);transform-origin:0 0;">Елена Шибанова</div><div class="t" style="left:1091.45px;top:741.66px;font-size:25.15px;line-height:25.15px;color:#333;transform:scaleX(1.0200);transform-origin:0 0;">4</div><div class="t" style="left:1265.82px;top:741.66px;font-size:25.15px;line-height:25.15px;color:#333;transform:scaleX(1.0200);transform-origin:0 0;">2</div><div class="t" style="left:1416.20px;top:741.66px;font-size:25.15px;line-height:25.15px;color:#333;transform:scaleX(1.0200);transform-origin:0 0;">1</div><div class="t" style="left:1565.20px;top:741.66px;font-size:25.15px;line-height:25.15px;color:#333;transform:scaleX(1.0200);transform-origin:0 0;">1</div><div class="t" style="left:1735.38px;top:741.66px;font-size:25.15px;line-height:25.15px;color:#333;transform:scaleX(1.0200);transform-origin:0 0;">0</div><div class="t" style="left:1918.50px;top:741.66px;font-size:25.15px;line-height:25.15px;color:#333;transform:scaleX(1.0200);transform-origin:0 0;">1</div><div class="b" style="left:2015.00px;top:728.20px;width:219.00px;height:53.65px;background:#f7d0d5"></div><div class="t" style="left:2117.00px;top:741.66px;font-size:25.15px;line-height:25.15px;color:#333;transform:scaleX(1.0200);transform-origin:0 0;">1</div><div class="t" style="left:2301.14px;top:741.66px;font-size:25.15px;line-height:25.15px;color:#333;transform:scaleX(1.0200);transform-origin:0 0;">25</div><div class="b" style="left:2397.00px;top:728.20px;width:206.00px;height:53.65px;background:#fde9a5"></div><div class="t" style="left:2492.95px;top:741.66px;font-size:25.15px;line-height:25.15px;color:#333;transform:scaleX(1.0200);transform-origin:0 0;">3</div><div class="t" style="left:2669.32px;top:741.66px;font-size:25.15px;line-height:25.15px;color:#333;transform:scaleX(1.0200);transform-origin:0 0;">338.33</div><div class="t" style="left:2895.23px;top:741.66px;font-size:25.15px;line-height:25.15px;color:#333;transform:scaleX(1.0200);transform-origin:0 0;">0</div><div class="t" style="left:3040.97px;top:741.66px;font-size:25.15px;line-height:25.15px;color:#a9a9a9;transform:scaleX(1.0200);transform-origin:0 0;">N/A</div><div class="t" style="left:3202.38px;top:741.66px;font-size:25.15px;line-height:25.15px;color:#333;transform:scaleX(1.0200);transform-origin:0 0;">0</div><div class="t" style="left:3372.38px;top:741.66px;font-size:25.15px;line-height:25.15px;color:#333;transform:scaleX(1.0200);transform-origin:0 0;">0</div><div class="b" style="left:746.00px;top:781.85px;width:2730.00px;height:2.00px;background:#dedede"></div><div class="b" style="left:746.00px;top:783.85px;width:2730.00px;height:53.65px;background:#fafafa"></div><div class="t" style="left:756.80px;top:797.31px;font-size:25.15px;line-height:25.15px;color:#333;transform:scaleX(1.0200);transform-origin:0 0;">Андр ей Кобец</div><div class="t" style="left:1091.45px;top:797.31px;font-size:25.15px;line-height:25.15px;color:#333;transform:scaleX(1.0200);transform-origin:0 0;">4</div><div class="t" style="left:1265.95px;top:797.31px;font-size:25.15px;line-height:25.15px;color:#333;transform:scaleX(1.0200);transform-origin:0 0;">4</div><div class="t" style="left:1416.58px;top:797.31px;font-size:25.15px;line-height:25.15px;color:#333;transform:scaleX(1.0200);transform-origin:0 0;">0</div><div class="t" style="left:1565.58px;top:797.31px;font-size:25.15px;line-height:25.15px;color:#333;transform:scaleX(1.0200);transform-origin:0 0;">0</div><div class="t" style="left:1735.38px;top:797.31px;font-size:25.15px;line-height:25.15px;color:#333;transform:scaleX(1.0200);transform-origin:0 0;">0</div><div class="t" style="left:1918.82px;top:797.31px;font-size:25.15px;line-height:25.15px;color:#333;transform:scaleX(1.0200);transform-origin:0 0;">2</div><div class="b" style="left:2015.00px;top:783.85px;width:219.00px;height:53.65px;background:#eea0a8"></div><div class="t" style="left:2117.32px;top:797.31px;font-size:25.15px;line-height:25.15px;color:#333;transform:scaleX(1.0200);transform-origin:0 0;">2</div><div class="t" style="left:2308.38px;top:797.31px;font-size:25.15px;line-height:25.15px;color:#333;transform:scaleX(1.0200);transform-origin:0 0;">0</div><div class="b" style="left:2397.00px;top:783.85px;width:206.00px;height:53.65px;background:#fdf3d3"></div><div class="t" style="left:2492.82px;top:797.31px;font-size:25.15px;line-height:25.15px;color:#333;transform:scaleX(1.0200);transform-origin:0 0;">2</div><div class="t" style="left:2683.62px;top:797.31px;font-size:25.15px;line-height:25.15px;color:#333;transform:scaleX(1.0200);transform-origin:0 0;">33.5</div><div class="t" style="left:2895.23px;top:797.31px;font-size:25.15px;line-height:25.15px;color:#333;transform:scaleX(1.0200);transform-origin:0 0;">0</div><div class="t" style="left:3040.97px;top:797.31px;font-size:25.15px;line-height:25.15px;color:#a9a9a9;transform:scaleX(1.0200);transform-origin:0 0;">N/A</div><div class="t" style="left:3202.38px;top:797.31px;font-size:25.15px;line-height:25.15px;color:#333;transform:scaleX(1.0200);transform-origin:0 0;">0</div><div class="t" style="left:3372.38px;top:797.31px;font-size:25.15px;line-height:25.15px;color:#333;transform:scaleX(1.0200);transform-origin:0 0;">0</div><div class="b" style="left:746.00px;top:837.50px;width:2730.00px;height:2.00px;background:#dedede"></div><div class="t" style="left:754.75px;top:852.96px;font-size:25.15px;line-height:25.15px;color:#333;transform:scaleX(1.0200);transform-origin:0 0;">Никита Чуприн!</div><div class="t" style="left:1091.32px;top:852.96px;font-size:25.15px;line-height:25.15px;color:#333;transform:scaleX(1.0200);transform-origin:0 0;">2</div><div class="t" style="left:1265.82px;top:852.96px;font-size:25.15px;line-height:25.15px;color:#333;transform:scaleX(1.0200);transform-origin:0 0;">2</div><div class="t" style="left:1416.58px;top:852.96px;font-size:25.15px;line-height:25.15px;color:#333;transform:scaleX(1.0200);transform-origin:0 0;">0</div><div class="t" style="left:1565.58px;top:852.96px;font-size:25.15px;line-height:25.15px;color:#333;transform:scaleX(1.0200);transform-origin:0 0;">0</div><div class="t" style="left:1735.38px;top:852.96px;font-size:25.15px;line-height:25.15px;color:#333;transform:scaleX(1.0200);transform-origin:0 0;">0</div><div class="t" style="left:1918.88px;top:852.96px;font-size:25.15px;line-height:25.15px;color:#333;transform:scaleX(1.0200);transform-origin:0 0;">0</div><div class="t" style="left:2117.38px;top:852.96px;font-size:25.15px;line-height:25.15px;color:#333;transform:scaleX(1.0200);transform-origin:0 0;">0</div><div class="t" style="left:2293.12px;top:852.96px;font-size:25.15px;line-height:25.15px;color:#a9a9a9;transform:scaleX(1.0200);transform-origin:0 0;">N/A</div><div class="b" style="left:2397.00px;top:839.50px;width:206.00px;height:53.65px;background:#fdf3d3"></div><div class="t" style="left:2492.82px;top:852.96px;font-size:25.15px;line-height:25.15px;color:#333;transform:scaleX(1.0200);transform-origin:0 0;">2</div><div class="t" style="left:2693.82px;top:852.96px;font-size:25.15px;line-height:25.15px;color:#333;transform:scaleX(1.0200);transform-origin:0 0;">13</div><div class="t" style="left:2895.23px;top:852.96px;font-size:25.15px;line-height:25.15px;color:#333;transform:scaleX(1.0200);transform-origin:0 0;">0</div><div class="t" style="left:3040.97px;top:852.96px;font-size:25.15px;line-height:25.15px;color:#a9a9a9;transform:scaleX(1.0200);transform-origin:0 0;">N/A</div><div class="t" style="left:3202.38px;top:852.96px;font-size:25.15px;line-height:25.15px;color:#333;transform:scaleX(1.0200);transform-origin:0 0;">0</div><div class="t" style="left:3372.38px;top:852.96px;font-size:25.15px;line-height:25.15px;color:#333;transform:scaleX(1.0200);transform-origin:0 0;">0</div><div class="b" style="left:746.00px;top:893.15px;width:2730.00px;height:2.00px;background:#dedede"></div><div class="b" style="left:746.00px;top:895.15px;width:2730.00px;height:53.65px;background:#fafafa"></div><div class="t" style="left:754.75px;top:908.61px;font-size:25.15px;line-height:25.15px;color:#333;transform:scaleX(1.0200);transform-origin:0 0;">Екатерина Шикина</div><div class="t" style="left:1091.32px;top:908.61px;font-size:25.15px;line-height:25.15px;color:#333;transform:scaleX(1.0200);transform-origin:0 0;">2</div><div class="t" style="left:1265.82px;top:908.61px;font-size:25.15px;line-height:25.15px;color:#333;transform:scaleX(1.0200);transform-origin:0 0;">2</div><div class="t" style="left:1416.58px;top:908.61px;font-size:25.15px;line-height:25.15px;color:#333;transform:scaleX(1.0200);transform-origin:0 0;">0</div><div class="t" style="left:1565.58px;top:908.61px;font-size:25.15px;line-height:25.15px;color:#333;transform:scaleX(1.0200);transform-origin:0 0;">0</div><div class="t" style="left:1735.38px;top:908.61px;font-size:25.15px;line-height:25.15px;color:#333;transform:scaleX(1.0200);transform-origin:0 0;">0</div><div class="t" style="left:1918.88px;top:908.61px;font-size:25.15px;line-height:25.15px;color:#333;transform:scaleX(1.0200);transform-origin:0 0;">0</div><div class="t" style="left:2117.38px;top:908.61px;font-size:25.15px;line-height:25.15px;color:#333;transform:scaleX(1.0200);transform-origin:0 0;">0</div><div class="t" style="left:2293.12px;top:908.61px;font-size:25.15px;line-height:25.15px;color:#a9a9a9;transform:scaleX(1.0200);transform-origin:0 0;">N/A</div><div class="b" style="left:2397.00px;top:895.15px;width:206.00px;height:53.65px;background:#fdf3d3"></div><div class="t" style="left:2492.82px;top:908.61px;font-size:25.15px;line-height:25.15px;color:#333;transform:scaleX(1.0200);transform-origin:0 0;">2</div><div class="t" style="left:2683.43px;top:908.61px;font-size:25.15px;line-height:25.15px;color:#333;transform:scaleX(1.0200);transform-origin:0 0;">26.5</div><div class="t" style="left:2895.23px;top:908.61px;font-size:25.15px;line-height:25.15px;color:#333;transform:scaleX(1.0200);transform-origin:0 0;">0</div><div class="t" style="left:3040.97px;top:908.61px;font-size:25.15px;line-height:25.15px;color:#a9a9a9;transform:scaleX(1.0200);transform-origin:0 0;">N/A</div><div class="t" style="left:3202.38px;top:908.61px;font-size:25.15px;line-height:25.15px;color:#333;transform:scaleX(1.0200);transform-origin:0 0;">0</div><div class="t" style="left:3372.38px;top:908.61px;font-size:25.15px;line-height:25.15px;color:#333;transform:scaleX(1.0200);transform-origin:0 0;">0</div><div class="b" style="left:746.00px;top:948.80px;width:2730.00px;height:2.00px;background:#dedede"></div><div class="t" style="left:755.52px;top:964.26px;font-size:25.15px;line-height:25.15px;color:#333;transform:scaleX(1.0200);transform-origin:0 0;">Эльзара Валишина</div><div class="t" style="left:1091.32px;top:964.26px;font-size:25.15px;line-height:25.15px;color:#333;transform:scaleX(1.0200);transform-origin:0 0;">2</div><div class="t" style="left:1265.82px;top:964.26px;font-size:25.15px;line-height:25.15px;color:#333;transform:scaleX(1.0200);transform-origin:0 0;">2</div><div class="t" style="left:1416.58px;top:964.26px;font-size:25.15px;line-height:25.15px;color:#333;transform:scaleX(1.0200);transform-origin:0 0;">0</div><div class="t" style="left:1565.58px;top:964.26px;font-size:25.15px;line-height:25.15px;color:#333;transform:scaleX(1.0200);transform-origin:0 0;">0</div><div class="t" style="left:1735.38px;top:964.26px;font-size:25.15px;line-height:25.15px;color:#333;transform:scaleX(1.0200);transform-origin:0 0;">0</div><div class="t" style="left:1918.50px;top:964.26px;font-size:25.15px;line-height:25.15px;color:#333;transform:scaleX(1.0200);transform-origin:0 0;">1</div><div class="t" style="left:2117.38px;top:964.26px;font-size:25.15px;line-height:25.15px;color:#333;transform:scaleX(1.0200);transform-origin:0 0;">0</div><div class="t" style="left:2293.12px;top:964.26px;font-size:25.15px;line-height:25.15px;color:#a9a9a9;transform:scaleX(1.0200);transform-origin:0 0;">N/A</div><div class="t" style="left:2492.50px;top:964.26px;font-size:25.15px;line-height:25.15px;color:#333;transform:scaleX(1.0200);transform-origin:0 0;">1</div><div class="t" style="left:2694.59px;top:964.26px;font-size:25.15px;line-height:25.15px;color:#333;transform:scaleX(1.0200);transform-origin:0 0;">42</div><div class="b" style="left:2814.00px;top:950.80px;width:176.70px;height:53.65px;background:#abdfc3"></div><div class="t" style="left:2894.85px;top:964.26px;font-size:25.15px;line-height:25.15px;color:#333;transform:scaleX(1.0200);transform-origin:0 0;">1</div><div class="t" style="left:3056.23px;top:964.26px;font-size:25.15px;line-height:25.15px;color:#333;transform:scaleX(1.0200);transform-origin:0 0;">0</div><div class="t" style="left:3202.38px;top:964.26px;font-size:25.15px;line-height:25.15px;color:#333;transform:scaleX(1.0200);transform-origin:0 0;">0</div><div class="b" style="left:3283.00px;top:950.80px;width:193.00px;height:53.65px;background:#43906a"></div><div class="t" style="left:3365.20px;top:964.26px;font-size:25.15px;line-height:25.15px;color:#333;transform:scaleX(1.0200);transform-origin:0 0;">50</div><div class="b" style="left:746.00px;top:1004.45px;width:2730.00px;height:2.00px;background:#dedede"></div><div class="b" style="left:746.00px;top:1006.45px;width:2730.00px;height:53.65px;background:#fafafa"></div><div class="t" style="left:756.80px;top:1019.91px;font-size:25.15px;line-height:25.15px;color:#333;transform:scaleX(1.0200);transform-origin:0 0;">Александр Салмов</div><div class="t" style="left:1091.32px;top:1019.91px;font-size:25.15px;line-height:25.15px;color:#333;transform:scaleX(1.0200);transform-origin:0 0;">2</div><div class="t" style="left:1265.82px;top:1019.91px;font-size:25.15px;line-height:25.15px;color:#333;transform:scaleX(1.0200);transform-origin:0 0;">2</div><div class="t" style="left:1416.58px;top:1019.91px;font-size:25.15px;line-height:25.15px;color:#333;transform:scaleX(1.0200);transform-origin:0 0;">0</div><div class="t" style="left:1565.58px;top:1019.91px;font-size:25.15px;line-height:25.15px;color:#333;transform:scaleX(1.0200);transform-origin:0 0;">0</div><div class="t" style="left:1735.38px;top:1019.91px;font-size:25.15px;line-height:25.15px;color:#333;transform:scaleX(1.0200);transform-origin:0 0;">0</div><div class="t" style="left:1918.88px;top:1019.91px;font-size:25.15px;line-height:25.15px;color:#333;transform:scaleX(1.0200);transform-origin:0 0;">0</div><div class="t" style="left:2117.38px;top:1019.91px;font-size:25.15px;line-height:25.15px;color:#333;transform:scaleX(1.0200);transform-origin:0 0;">0</div><div class="t" style="left:2293.12px;top:1019.91px;font-size:25.15px;line-height:25.15px;color:#a9a9a9;transform:scaleX(1.0200);transform-origin:0 0;">N/A</div><div class="b" style="left:2397.00px;top:1006.45px;width:206.00px;height:53.65px;background:#fdf3d3"></div><div class="t" style="left:2492.82px;top:1019.91px;font-size:25.15px;line-height:25.15px;color:#333;transform:scaleX(1.0200);transform-origin:0 0;">2</div><div class="t" style="left:2694.52px;top:1019.91px;font-size:25.15px;line-height:25.15px;color:#333;transform:scaleX(1.0200);transform-origin:0 0;">46</div><div class="t" style="left:2895.23px;top:1019.91px;font-size:25.15px;line-height:25.15px;color:#333;transform:scaleX(1.0200);transform-origin:0 0;">0</div><div class="t" style="left:3040.97px;top:1019.91px;font-size:25.15px;line-height:25.15px;color:#a9a9a9;transform:scaleX(1.0200);transform-origin:0 0;">N/A</div><div class="t" style="left:3202.38px;top:1019.91px;font-size:25.15px;line-height:25.15px;color:#333;transform:scaleX(1.0200);transform-origin:0 0;">0</div><div class="t" style="left:3372.38px;top:1019.91px;font-size:25.15px;line-height:25.15px;color:#333;transform:scaleX(1.0200);transform-origin:0 0;">0</div><div class="b" style="left:746.00px;top:1060.10px;width:2730.00px;height:2.00px;background:#dedede"></div><div class="t" style="left:756.29px;top:1075.56px;font-size:25.15px;line-height:25.15px;color:#333;transform:scaleX(1.0200);transform-origin:0 0;">Татьяна Цогоева</div><div class="t" style="left:1091.32px;top:1075.56px;font-size:25.15px;line-height:25.15px;color:#333;transform:scaleX(1.0200);transform-origin:0 0;">2</div><div class="t" style="left:1265.82px;top:1075.56px;font-size:25.15px;line-height:25.15px;color:#333;transform:scaleX(1.0200);transform-origin:0 0;">2</div><div class="t" style="left:1416.58px;top:1075.56px;font-size:25.15px;line-height:25.15px;color:#333;transform:scaleX(1.0200);transform-origin:0 0;">0</div><div class="t" style="left:1565.58px;top:1075.56px;font-size:25.15px;line-height:25.15px;color:#333;transform:scaleX(1.0200);transform-origin:0 0;">0</div><div class="t" style="left:1735.38px;top:1075.56px;font-size:25.15px;line-height:25.15px;color:#333;transform:scaleX(1.0200);transform-origin:0 0;">0</div><div class="t" style="left:1918.88px;top:1075.56px;font-size:25.15px;line-height:25.15px;color:#333;transform:scaleX(1.0200);transform-origin:0 0;">0</div><div class="t" style="left:2117.38px;top:1075.56px;font-size:25.15px;line-height:25.15px;color:#333;transform:scaleX(1.0200);transform-origin:0 0;">0</div><div class="t" style="left:2293.12px;top:1075.56px;font-size:25.15px;line-height:25.15px;color:#a9a9a9;transform:scaleX(1.0200);transform-origin:0 0;">N/A</div><div class="b" style="left:2397.00px;top:1062.10px;width:206.00px;height:53.65px;background:#fdf3d3"></div><div class="t" style="left:2492.82px;top:1075.56px;font-size:25.15px;line-height:25.15px;color:#333;transform:scaleX(1.0200);transform-origin:0 0;">2</div><div class="t" style="left:2693.88px;top:1075.56px;font-size:25.15px;line-height:25.15px;color:#333;transform:scaleX(1.0200);transform-origin:0 0;">17</div><div class="t" style="left:2895.23px;top:1075.56px;font-size:25.15px;line-height:25.15px;color:#333;transform:scaleX(1.0200);transform-origin:0 0;">0</div><div class="t" style="left:3040.97px;top:1075.56px;font-size:25.15px;line-height:25.15px;color:#a9a9a9;transform:scaleX(1.0200);transform-origin:0 0;">N/A</div><div class="t" style="left:3202.38px;top:1075.56px;font-size:25.15px;line-height:25.15px;color:#333;transform:scaleX(1.0200);transform-origin:0 0;">0</div><div class="t" style="left:3372.38px;top:1075.56px;font-size:25.15px;line-height:25.15px;color:#333;transform:scaleX(1.0200);transform-origin:0 0;">0</div></div><div class="b" style="left:3476.00px;top:564.80px;width:33.50px;height:546.80px;background:#f1f1f1"></div><div class="b" style="left:3479.00px;top:602.00px;width:28.70px;height:479.00px;background:#c1c1c1"></div><svg style="left:3483px;top:577px" width="20" height="12" viewBox="0 0 20 12"><path d="M1.5 10.5L10 1.5L18.5 10.5Z" fill="#505050"/></svg><svg style="left:3483px;top:1090px" width="20" height="12" viewBox="0 0 20 12"><path d="M1.5 1.5L10 10.5L18.5 1.5Z" fill="#a3a3a3"/></svg><div class="b" style="left:3398.80px;top:1126.70px;width:110.20px;height:58.10px;border:2px solid #dedede;border-radius:9px;background:#fff;overflow:hidden"></div><div class="b" style="left:3400.80px;top:1128.70px;width:51.20px;height:54.10px;background:#f5f5f5;border-radius:7px 0 0 7px"></div><div class="b" style="left:3451.00px;top:1128.70px;width:2.00px;height:54.10px;background:#dedede"></div><div class="t" style="left:3418.59px;top:1146.70px;font-size:23.98px;line-height:23.98px;color:#a0a0a0;">1</div><div class="t" style="left:3473.78px;top:1146.70px;font-size:23.98px;line-height:23.98px;color:#1a85b8;">2</div><div class="b" style="left:3640.00px;top:130.00px;width:33.00px;height:1758.00px;background:#f1f1f1"></div><div class="b" style="left:3641.70px;top:453.00px;width:30.30px;height:389.40px;background:#c1c1c1"></div><svg style="left:3646px;top:141px" width="20" height="12" viewBox="0 0 20 12"><path d="M1.5 10.5L10 1.5L18.5 10.5Z" fill="#505050"/></svg><svg style="left:3646px;top:1864px" width="20" height="12" viewBox="0 0 20 12"><path d="M1.5 1.5L10 10.5L18.5 1.5Z" fill="#505050"/></svg><div class="b" style="left:714.00px;top:1279.00px;width:1897.00px;height:609.00px;background:#fff;border-radius:6px 6px 0 0"></div><div class="t" style="left:746.52px;top:1319.40px;font-size:33.43px;line-height:33.43px;color:#333;-webkit-text-stroke:0.9px #333;transform:scaleX(1.0639);transform-origin:0 0;">Динамика сделок по кварталам [it-solution]</div><svg style="left:0;top:0" width="3840" height="1890" viewBox="0 0 3840 1890"><path d="M757.9 1398H807.9" stroke="#9a60b4" stroke-width="4.5"/><circle cx="782.9" cy="1398.2" r="11" fill="#fff" stroke="#9a60b4" stroke-width="3.6"/><path d="M1075.4 1398H1125.4" stroke="#ea7ccc" stroke-width="4.5"/><circle cx="1100.4" cy="1398.2" r="11" fill="#fff" stroke="#ea7ccc" stroke-width="3.6"/><path d="M1318.8 1398H1368.8" stroke="#fc8452" stroke-width="4.5"/><circle cx="1343.8" cy="1398.2" r="11" fill="#fff" stroke="#fc8452" stroke-width="3.6"/><path d="M1581 1398H1631" stroke="#73c0de" stroke-width="4.5"/><circle cx="1606" cy="1398.2" r="11" fill="#fff" stroke="#73c0de" stroke-width="3.6"/><path d="M1864.6 1398H1914.6" stroke="#3ba272" stroke-width="4.5"/><circle cx="1889.6" cy="1398.2" r="11" fill="#fff" stroke="#3ba272" stroke-width="3.6"/><path d="M2111.5 1398H2161.5" stroke="#3ba272" stroke-width="4.5"/><circle cx="2136.5" cy="1398.2" r="11" fill="#fff" stroke="#3ba272" stroke-width="3.6"/></svg><div class="t" style="left:819.00px;top:1382.85px;font-size:26.16px;line-height:26.16px;color:#333;transform:scaleX(0.9578);transform-origin:0 0;">Александра Серова</div><div class="t" style="left:1133.65px;top:1382.85px;font-size:26.16px;line-height:26.16px;color:#333;transform:scaleX(1.0254);transform-origin:0 0;">Иван Сомкин</div><div class="t" style="left:1380.00px;top:1382.85px;font-size:26.16px;line-height:26.16px;color:#333;transform:scaleX(0.9954);transform-origin:0 0;">Андр ей Кобец</div><div class="t" style="left:1635.93px;top:1382.85px;font-size:26.16px;line-height:26.16px;color:#333;transform:scaleX(0.9885);transform-origin:0 0;">Елена Шибанова</div><div class="t" style="left:1923.42px;top:1382.85px;font-size:26.16px;line-height:26.16px;color:#333;transform:scaleX(0.9941);transform-origin:0 0;">Михаил Грега</div><div class="b" style="left:2160px;top:1370px;width:134px;height:60px;overflow:hidden"><div class="t" style="left:12.40px;top:12.85px;font-size:26.16px;line-height:26.16px;color:#333;transform:scaleX(1.0747);transform-origin:0 0;">Александра</div></div><svg style="left:2312px;top:1382px" width="124" height="32" viewBox="0 0 124 32"><path d="M20 1.6V30L2 15.8Z" fill="#aaaaaa"/><path d="M99 1.6V30L117 15.8Z" fill="#2f4554"/></svg><div class="t" style="left:2351.38px;top:1382.85px;font-size:26.16px;line-height:26.16px;color:#333;transform:scaleX(1.0815);transform-origin:0 0;">1/4</div><div class="b" style="left:2449.30px;top:1379.80px;width:48.70px;height:36.20px;border:2px solid #555;border-radius:18px"></div><div class="t" style="left:2458.60px;top:1385.58px;font-size:24.71px;line-height:24.71px;color:#555;transform:scaleX(1.1563);transform-origin:0 0;">All</div><div class="b" style="left:2513.00px;top:1379.80px;width:54.30px;height:36.20px;border:2px solid #555;border-radius:18px"></div><div class="t" style="left:2520.64px;top:1385.58px;font-size:24.71px;line-height:24.71px;color:#555;transform:scaleX(1.1052);transform-origin:0 0;">Inv</div><svg style="left:0;top:0" width="3840" height="1890" viewBox="0 0 3840 1890"><path d="M874.8 1509.7H2537.6" stroke="#e0e6f1" stroke-width="2"/><path d="M874.8 1591.9H2537.6" stroke="#e0e6f1" stroke-width="2"/><path d="M874.8 1675.6H2537.6" stroke="#e0e6f1" stroke-width="2"/><path d="M874.8 1757.4H2537.6" stroke="#e0e6f1" stroke-width="2"/><path d="M874.8 1839.6H2537.6" stroke="#e0e6f1" stroke-width="2"/><path d="M869 1526.2H875" stroke="#6e7079" stroke-width="2.5"/><path d="M869 1542.7H875" stroke="#6e7079" stroke-width="2.5"/><path d="M869 1559.2H875" stroke="#6e7079" stroke-width="2.5"/><path d="M869 1575.7H875" stroke="#6e7079" stroke-width="2.5"/><path d="M869 1608.7H875" stroke="#6e7079" stroke-width="2.5"/><path d="M869 1625.2H875" stroke="#6e7079" stroke-width="2.5"/><path d="M869 1641.7H875" stroke="#6e7079" stroke-width="2.5"/><path d="M869 1658.2H875" stroke="#6e7079" stroke-width="2.5"/><path d="M869 1691.2H875" stroke="#6e7079" stroke-width="2.5"/><path d="M869 1707.7H875" stroke="#6e7079" stroke-width="2.5"/><path d="M869 1724.2H875" stroke="#6e7079" stroke-width="2.5"/><path d="M869 1740.7H875" stroke="#6e7079" stroke-width="2.5"/><path d="M869 1773.7H875" stroke="#6e7079" stroke-width="2.5"/><path d="M869 1790.2H875" stroke="#6e7079" stroke-width="2.5"/><path d="M869 1806.7H875" stroke="#6e7079" stroke-width="2.5"/><path d="M869 1823.2H875" stroke="#6e7079" stroke-width="2.5"/><path d="M869 1856.2H875" stroke="#6e7079" stroke-width="2.5"/><path d="M869 1872.7H875" stroke="#6e7079" stroke-width="2.5"/><path d="M869 1889.2H875" stroke="#6e7079" stroke-width="2.5"/><path d="M1082.7 1757.4L1498.6 1839.6L1914 1839.6" fill="none" stroke="#73c0de" stroke-width="4"/><circle cx="1082.7" cy="1509.7" r="5" fill="#fff" stroke="#ea7ccc" stroke-width="4"/><circle cx="1082.7" cy="1591.9" r="5" fill="#fff" stroke="#fc8452" stroke-width="4"/><circle cx="1082.7" cy="1757.4" r="5" fill="#fff" stroke="#5470c6" stroke-width="4"/><circle cx="1082.7" cy="1839.6" r="5" fill="#fff" stroke="#5470c6" stroke-width="4"/><circle cx="1498.6" cy="1839.6" r="5" fill="#fff" stroke="#73c0de" stroke-width="4"/><circle cx="1914" cy="1839.6" r="5" fill="#fff" stroke="#73c0de" stroke-width="4"/><circle cx="2329.7" cy="1839.6" r="5" fill="#fff" stroke="#91cc75" stroke-width="4"/></svg><div class="t" style="left:845.20px;top:1493.86px;font-size:24.85px;line-height:24.85px;color:#6e7079;">5</div><div class="t" style="left:844.83px;top:1576.06px;font-size:24.85px;line-height:24.85px;color:#6e7079;">4</div><div class="t" style="left:845.20px;top:1659.76px;font-size:24.85px;line-height:24.85px;color:#6e7079;">3</div><div class="t" style="left:845.32px;top:1741.56px;font-size:24.85px;line-height:24.85px;color:#6e7079;">2</div><div class="t" style="left:845.32px;top:1823.76px;font-size:24.85px;line-height:24.85px;color:#6e7079;">1</div><div class="t" style="left:801.4px;top:1715px;transform:translate(-50%,-50%) rotate(-90deg);font-size:26px;line-height:26px;color:#6e7079">Кол-во сделок</div><div class="b" style="left:2643.00px;top:1279.00px;width:933.00px;height:609.00px;background:#fff;border-radius:6px 6px 0 0"></div><div class="t" style="left:2674.62px;top:1319.30px;font-size:33.43px;line-height:33.43px;color:#333;-webkit-text-stroke:0.9px #333;transform:scaleX(1.0663);transform-origin:0 0;">Сделки по статусам (по дате закрытия) [it-solution]</div><div class="b" style="left:2910.60px;top:1384.20px;width:49.20px;height:27.60px;background:#5cacde;border-radius:6px"></div><div class="t" style="left:2969.55px;top:1381.85px;font-size:26.16px;line-height:26.16px;color:#333;transform:scaleX(0.9780);transform-origin:0 0;">В работе</div><div class="b" style="left:3096.70px;top:1384.20px;width:49.30px;height:27.60px;background:#ea7680;border-radius:6px"></div><div class="t" style="left:3154.89px;top:1381.85px;font-size:26.16px;line-height:26.16px;color:#333;transform:scaleX(1.0105);transform-origin:0 0;">Провал</div><div class="b" style="left:3266.80px;top:1384.20px;width:49.20px;height:27.60px;background:#72d19a;border-radius:6px"></div><div class="t" style="left:3326.37px;top:1381.85px;font-size:26.16px;line-height:26.16px;color:#333;transform:scaleX(0.9651);transform-origin:0 0;">Успех</div><div class="b" style="left:3414.50px;top:1379.40px;width:48.50px;height:37.40px;border:2px solid #555;border-radius:19px"></div><div class="t" style="left:3423.70px;top:1385.58px;font-size:24.71px;line-height:24.71px;color:#555;transform:scaleX(1.1563);transform-origin:0 0;">All</div><div class="b" style="left:3478.50px;top:1379.40px;width:53.50px;height:37.40px;border:2px solid #555;border-radius:19px"></div><div class="t" style="left:3485.74px;top:1385.58px;font-size:24.71px;line-height:24.71px;color:#555;transform:scaleX(1.1052);transform-origin:0 0;">Inv</div><svg style="left:0;top:0" width="3840" height="1890" viewBox="0 0 3840 1890"><path d="M3109.50 1505.60A229 229 0 1 1 2883.32 1770.42L3012.71 1749.93A98 98 0 1 0 3109.50 1636.60Z" fill="#5cacde" stroke="#fff" stroke-width="0.8"/><path d="M2883.32 1770.42A229 229 0 0 1 2974.90 1549.34L3051.90 1655.32A98 98 0 0 0 3012.71 1749.93Z" fill="#ea7680" stroke="#fff" stroke-width="0.8"/><path d="M2974.90 1549.34A229 229 0 0 1 3109.50 1505.60L3109.50 1636.60A98 98 0 0 0 3051.90 1655.32Z" fill="#72d19a" stroke="#fff" stroke-width="0.8"/><path d="M3000.3 1489.6H3030L3037.7 1516.8" fill="none" stroke="#72d19a" stroke-width="2"/><path d="M2840.4 1636.2H2870L2896.8 1647.5" fill="none" stroke="#ea7680" stroke-width="2"/><path d="M3290 1885L3300 1895" fill="none" stroke="#5cacde" stroke-width="2"/></svg><div class="t" style="left:2920.36px;top:1473.85px;font-size:26.16px;line-height:26.16px;color:#222;transform:scaleX(0.9812);transform-origin:0 0;">Успех</div><div class="t" style="left:2737.88px;top:1620.85px;font-size:26.16px;line-height:26.16px;color:#222;transform:scaleX(1.0139);transform-origin:0 0;">Провал</div><div class="t" style="left:3036.43px;top:1717.58px;font-size:33.58px;line-height:33.58px;color:#000;font-weight:700;transform:scaleX(0.9492);transform-origin:0 0;">Итого: 40</div><div class="b" style="left:130px;top:1888px;width:3710px;height:2px;background:#fff"></div><div class="b" style="left:3673.00px;top:0.00px;width:167.00px;height:1888.00px;background:#eef1f4"></div><div class="b" style="left:3674.00px;top:0.00px;width:2.00px;height:1888.00px;background:#dde5e9"></div><div class="b" style="left:3708.00px;top:29.80px;width:64.30px;height:63.80px;background:#dde1e6;border-radius:12px"></div><svg style="left:3725px;top:47px" width="30" height="30" viewBox="0 0 30 30"><circle cx="15" cy="15" r="15" fill="#5f6b7a"/><path d="M10.3 11.2C10.3 8.3 12.4 6.6 15.1 6.6C17.8 6.6 19.8 8.2 19.8 10.7C19.8 13.8 16.4 14 16.4 17.2H13.6C13.6 13.2 16.9 12.9 16.9 10.9C16.9 9.8 16.2 9.1 15.1 9.1C13.9 9.1 13.2 9.9 13.1 11.2Z" fill="#fff"/><circle cx="15" cy="21.3" r="1.9" fill="#fff"/></svg><div class="b" style="left:3752.00px;top:21.00px;width:32.00px;height:27.00px;background:#f4563f;border-radius:14px"></div><div class="t" style="left:3762.15px;top:23.66px;font-size:21.08px;line-height:21.08px;color:#fff;font-weight:700;">7</div><div class="b" style="left:3698.00px;top:125.50px;width:86.00px;height:2.00px;background:#dde2e7"></div><div class="b" style="left:3698.00px;top:435.00px;width:86.00px;height:2.00px;background:#dde2e7"></div><div class="b" style="left:3698.00px;top:512.00px;width:86.00px;height:2.00px;background:#dde2e7"></div><div class="b" style="left:3707.00px;top:155.80px;width:68.00px;height:68.00px;background:#dfe3e8;border-radius:50%"></div><div class="b" style="left:3707.00px;top:247.70px;width:68.00px;height:68.00px;background:#dfe3e8;border-radius:50%"></div><div class="b" style="left:3707.00px;top:339.60px;width:68.00px;height:68.00px;background:#dfe3e8;border-radius:50%"></div><svg style="left:3716px;top:165px" width="50" height="50" viewBox="0 0 50 50"><path d="M37.5 16.5A15 15 0 1 0 39.5 30" fill="none" stroke="#5f6b7a" stroke-width="4.2" stroke-linecap="round"/><circle cx="25" cy="25" r="10" fill="#5f6b7a"/><path d="M23 17L24.6 22.4L30 24L24.6 25.6L23 31L21.4 25.6L16 24L21.4 22.4Z" fill="#dfe3e8"/><path d="M29.5 26.5L30.3 28.7L32.5 29.5L30.3 30.3L29.5 32.5L28.7 30.3L26.5 29.5L28.7 28.7Z" fill="#dfe3e8"/></svg><svg style="left:3716px;top:257px" width="50" height="50" viewBox="0 0 50 50"><path d="M25 9C18.5 9 15 14 15 20V29L11 34H39L35 29V20C35 14 31.5 9 25 9Z" fill="#5f6b7a"/><rect x="23" y="6" width="4" height="5" rx="2" fill="#5f6b7a"/><path d="M20.5 36.5A4.5 4.5 0 0 0 29.5 36.5Z" fill="#5f6b7a"/></svg><div class="b" style="left:3749.00px;top:246.00px;width:35.00px;height:28.00px;background:#f4563f;border-radius:14px"></div><div class="t" style="left:3754.86px;top:249.66px;font-size:21.08px;line-height:21.08px;color:#fff;font-weight:700;">53</div><svg style="left:3716px;top:349px" width="50" height="50" viewBox="0 0 50 50"><circle cx="25" cy="25" r="16.5" fill="none" stroke="#5f6b7a" stroke-width="4"/><path d="M35 36L43.5 40.5L38.5 32Z" fill="#5f6b7a"/><path d="M31 18.5H19M22.5 15L19 18.5L22.5 22M18 25H32M18 31.5H30.5M27 28L30.5 31.5L27 35" fill="none" stroke="#5f6b7a" stroke-width="2.6" stroke-linecap="round" stroke-linejoin="round"/></svg><svg style="left:3720px;top:455px" width="42" height="42" viewBox="0 0 42 42"><circle cx="16" cy="16" r="11" fill="none" stroke="#5f6b7a" stroke-width="3.6"/><path d="M24 24L36 36" stroke="#5f6b7a" stroke-width="4" stroke-linecap="round"/></svg><div class="b" style="left:3709.00px;top:544.50px;width:64.00px;height:64.00px;background:#ec9a82;border-radius:50%"></div><div class="t" style="left:3720.10px;top:565.11px;font-size:26.45px;line-height:26.45px;color:#fff;">МА</div><div class="b" style="left:3709.00px;top:636.60px;width:64.00px;height:64.00px;background:#2a63a6;border-radius:50%"></div><svg style="left:3713px;top:645.6px" width="56" height="56" viewBox="0 0 56 56"><path d="M16 5.5H40C45 5.5 48 8 48 14V24C48 30 45 32.5 41 32.5L40.5 41L33.5 34.5H16C11 34.5 8 32 8 26V14C8 8 11 5.5 16 5.5Z" fill="#fff"/><circle cx="19" cy="14.5" r="2.6" fill="#2a63a6"/><circle cx="36.5" cy="14.5" r="2.6" fill="#2a63a6"/><circle cx="27.8" cy="13" r="3.3" fill="#2a63a6"/><path d="M13.5 25C13.5 21 16 19 19 19C20.5 19 21.5 19.5 22.5 20.3C21.5 21.8 21 23.3 21 25Z" fill="#2a63a6"/><path d="M42 25C42 21 39.5 19 36.5 19C35 19 34 19.5 33 20.3C34 21.8 34.5 23.3 34.5 25Z" fill="#2a63a6"/><path d="M20.5 26C20.5 20.5 23.5 17.5 27.8 17.5C32 17.5 35 20.5 35 26Z" fill="#2a63a6"/></svg><div class="b" style="left:3751.00px;top:633.60px;width:32.00px;height:26.00px;background:rgba(243,84,60,0.93);border-radius:14px"></div><div class="t" style="left:3761.20px;top:635.26px;font-size:21.08px;line-height:21.08px;color:#fff;font-weight:700;">2</div><div class="b" style="left:3709.00px;top:728.70px;width:64.00px;height:64.00px;background:#8fc2e4;border-radius:50%"></div><div class="t" style="left:3722.75px;top:749.31px;font-size:26.45px;line-height:26.45px;color:#fff;">ПК</div><div class="b" style="left:3709.00px;top:820.80px;width:64.00px;height:64.00px;background:#c9a594;border-radius:50%"></div><div class="t" style="left:3722.81px;top:841.41px;font-size:26.45px;line-height:26.45px;color:#fff;">СБ</div><div class="b" style="left:3709.00px;top:912.90px;width:64.00px;height:64.00px;background:#ec9a82;border-radius:50%"></div><div class="t" style="left:3723.41px;top:933.51px;font-size:26.45px;line-height:26.45px;color:#fff;">КА</div><div class="b" style="left:3709.00px;top:1005.00px;width:64.00px;height:64.00px;background:#94d98b;border-radius:50%"></div><div class="t" style="left:3724.53px;top:1025.61px;font-size:26.45px;line-height:26.45px;color:#fff;">КК</div><div class="b" style="left:3709.00px;top:1097.10px;width:64.00px;height:64.00px;background:#74cbc7;border-radius:50%"></div><div class="t" style="left:3724.20px;top:1117.71px;font-size:26.45px;line-height:26.45px;color:#fff;">ВТ</div><div class="b" style="left:3709.00px;top:1189.20px;width:64.00px;height:64.00px;background:#f2f2f2;border-radius:50%"></div><div class="b" style="left:3709px;top:1189.1999999999998px;width:64px;height:64px;border-radius:50%;overflow:hidden;background:#f4f6f8"><div class="b" style="left:20px;top:40px;width:26px;height:30px;background:#e6cbc4;border-radius:0 0 40% 40%"></div><div class="b" style="left:12px;top:25px;width:6px;height:13px;border-radius:50%;background:#e3c5bd"></div><div class="b" style="left:47px;top:25px;width:6px;height:13px;border-radius:50%;background:#e3c5bd"></div><div class="b" style="left:14px;top:9px;width:36px;height:47px;border-radius:46% 46% 42% 42%;background:#ebd3cc"></div><div class="b" style="left:14px;top:6px;width:36px;height:16px;border-radius:18px 18px 4px 4px;background:#cdb3a3"></div><div class="b" style="left:21px;top:26px;width:8px;height:3px;background:#8e9aa8;border-radius:2px"></div><div class="b" style="left:35px;top:26px;width:8px;height:3px;background:#8e9aa8;border-radius:2px"></div><div class="b" style="left:26px;top:42px;width:12px;height:3px;background:#d3a9a6;border-radius:2px"></div></div><div class="b" style="left:3709.00px;top:1281.30px;width:64.00px;height:64.00px;background:#94d98b;border-radius:50%"></div><div class="t" style="left:3723.47px;top:1301.91px;font-size:26.45px;line-height:26.45px;color:#fff;">КД</div><div class="b" style="left:3709.00px;top:1373.40px;width:64.00px;height:64.00px;background:#74cbc7;border-radius:50%"></div><div class="t" style="left:3722.68px;top:1394.01px;font-size:26.45px;line-height:26.45px;color:#fff;">ВИ</div><div class="b" style="left:3709.00px;top:1465.50px;width:64.00px;height:64.00px;background:#8fc2e4;border-radius:50%"></div><div class="t" style="left:3719.57px;top:1486.11px;font-size:26.45px;line-height:26.45px;color:#fff;">ШЕ</div><div class="b" style="left:3709.00px;top:1557.60px;width:64.00px;height:64.00px;background:#b2a9de;border-radius:50%"></div><div class="t" style="left:3722.81px;top:1578.21px;font-size:26.45px;line-height:26.45px;color:#fff;">СБ</div><div class="b" style="left:3709.00px;top:1649.70px;width:64.00px;height:64.00px;background:#94d98b;border-radius:50%"></div><div class="t" style="left:3722.81px;top:1670.31px;font-size:26.45px;line-height:26.45px;color:#fff;">СБ</div><div class="b" style="left:3709.00px;top:1741.80px;width:64.00px;height:64.00px;background:#f3a1b5;border-radius:50%"></div><div class="t" style="left:3722.81px;top:1762.41px;font-size:26.45px;line-height:26.45px;color:#fff;">СБ</div><div class="b" style="left:3709.00px;top:1833.90px;width:64.00px;height:64.00px;background:#74cbc7;border-radius:50%"></div><div class="t" style="left:3722.81px;top:1854.51px;font-size:26.45px;line-height:26.45px;color:#fff;">СБ</div></body></html>
